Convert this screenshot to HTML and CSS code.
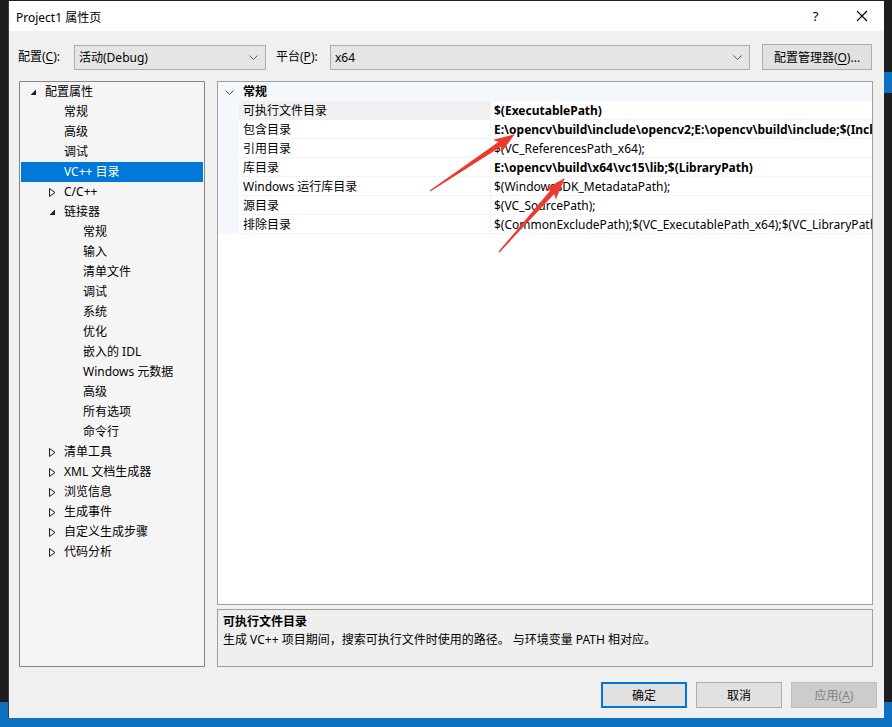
FILE: index.html
```html
<!DOCTYPE html>
<html lang="zh-CN">
<head>
<meta charset="utf-8">
<title>Project1 属性页</title>
<link rel="stylesheet" href="styles.css">
</head>
<body>
<div class="desk">
  <div class="dialog">
    <div class="titlebar">
      <span class="title">Project1 属性页</span>
      <span class="tb-btn help">?</span>
      <span class="tb-btn close"><svg width="12" height="12" viewBox="0 0 12 12"><path d="M1 1L11 11M11 1L1 11" stroke="#000" stroke-width="1.1" fill="none"/></svg></span>
    </div>
    <div class="content">
      <div class="config-row">
        <span class="lbl lbl-config">配置(<u>C</u>):</span>
        <div class="combo combo-config"><span>活动(Debug)</span><svg class="chev" width="9" height="5" viewBox="0 0 9 5"><path d="M0.5 0.5L4.5 4.5L8.5 0.5" stroke="#606060" fill="none"/></svg></div>
        <span class="lbl lbl-platform">平台(<u>P</u>):</span>
        <div class="combo combo-platform"><span>x64</span><svg class="chev" width="9" height="5" viewBox="0 0 9 5"><path d="M0.5 0.5L4.5 4.5L8.5 0.5" stroke="#606060" fill="none"/></svg></div>
        <button class="btn btn-manager">配置管理器(<u>O</u>)...</button>
      </div>
      <div class="main">
        <div class="tree">
          <div class="node l0"><span class="tg"><svg width="7" height="7" viewBox="0 0 7 7"><path d="M6 0.5V6H0.5Z" fill="#1e1e1e"/></svg></span>配置属性</div>
          <div class="node l1"><span class="tg"></span>常规</div>
          <div class="node l1"><span class="tg"></span>高级</div>
          <div class="node l1"><span class="tg"></span>调试</div>
          <div class="node l1 sel"><span class="tg"></span>VC++ 目录</div>
          <div class="node l1"><span class="tg"><svg width="7" height="9" viewBox="0 0 7 9"><path d="M0.5 0.5L6 4.5L0.5 8.5Z" stroke="#1e1e1e" fill="none"/></svg></span>C/C++</div>
          <div class="node l1"><span class="tg"><svg width="7" height="7" viewBox="0 0 7 7"><path d="M6 0.5V6H0.5Z" fill="#1e1e1e"/></svg></span>链接器</div>
          <div class="node l2"><span class="tg"></span>常规</div>
          <div class="node l2"><span class="tg"></span>输入</div>
          <div class="node l2"><span class="tg"></span>清单文件</div>
          <div class="node l2"><span class="tg"></span>调试</div>
          <div class="node l2"><span class="tg"></span>系统</div>
          <div class="node l2"><span class="tg"></span>优化</div>
          <div class="node l2"><span class="tg"></span>嵌入的 IDL</div>
          <div class="node l2"><span class="tg"></span>Windows 元数据</div>
          <div class="node l2"><span class="tg"></span>高级</div>
          <div class="node l2"><span class="tg"></span>所有选项</div>
          <div class="node l2"><span class="tg"></span>命令行</div>
          <div class="node l1"><span class="tg"><svg width="7" height="9" viewBox="0 0 7 9"><path d="M0.5 0.5L6 4.5L0.5 8.5Z" stroke="#1e1e1e" fill="none"/></svg></span>清单工具</div>
          <div class="node l1"><span class="tg"><svg width="7" height="9" viewBox="0 0 7 9"><path d="M0.5 0.5L6 4.5L0.5 8.5Z" stroke="#1e1e1e" fill="none"/></svg></span>XML 文档生成器</div>
          <div class="node l1"><span class="tg"><svg width="7" height="9" viewBox="0 0 7 9"><path d="M0.5 0.5L6 4.5L0.5 8.5Z" stroke="#1e1e1e" fill="none"/></svg></span>浏览信息</div>
          <div class="node l1"><span class="tg"><svg width="7" height="9" viewBox="0 0 7 9"><path d="M0.5 0.5L6 4.5L0.5 8.5Z" stroke="#1e1e1e" fill="none"/></svg></span>生成事件</div>
          <div class="node l1"><span class="tg"><svg width="7" height="9" viewBox="0 0 7 9"><path d="M0.5 0.5L6 4.5L0.5 8.5Z" stroke="#1e1e1e" fill="none"/></svg></span>自定义生成步骤</div>
          <div class="node l1"><span class="tg"><svg width="7" height="9" viewBox="0 0 7 9"><path d="M0.5 0.5L6 4.5L0.5 8.5Z" stroke="#1e1e1e" fill="none"/></svg></span>代码分析</div>
        </div>
        <div class="right">
          <div class="grid">
            <div class="grow head">
              <span class="gut"><svg width="9" height="5" viewBox="0 0 9 5"><path d="M0.5 0.5L4.5 4.5L8.5 0.5" stroke="#404040" fill="none"/></svg></span>
              <span class="cat">常规</span>
            </div>
            <div class="grow selrow"><span class="gut"></span><span class="name">可执行文件目录</span><span class="val b">$(ExecutablePath)</span></div>
            <div class="grow"><span class="gut"></span><span class="name">包含目录</span><span class="val b">E:\opencv\build\include\opencv2;E:\opencv\build\include;$(IncludePath)</span></div>
            <div class="grow"><span class="gut"></span><span class="name">引用目录</span><span class="val">$(VC_ReferencesPath_x64);</span></div>
            <div class="grow"><span class="gut"></span><span class="name">库目录</span><span class="val b">E:\opencv\build\x64\vc15\lib;$(LibraryPath)</span></div>
            <div class="grow"><span class="gut"></span><span class="name">Windows 运行库目录</span><span class="val">$(WindowsSDK_MetadataPath);</span></div>
            <div class="grow"><span class="gut"></span><span class="name">源目录</span><span class="val">$(VC_SourcePath);</span></div>
            <div class="grow"><span class="gut"></span><span class="name">排除目录</span><span class="val">$(CommonExcludePath);$(VC_ExecutablePath_x64);$(VC_LibraryPath_x64)</span></div>
          </div>
          <div class="desc">
            <div class="desc-title">可执行文件目录</div>
            <div class="desc-text">生成 VC++ 项目期间，搜索可执行文件时使用的路径。 与环境变量 PATH 相对应。</div>
          </div>
        </div>
      </div>
      <div class="buttons">
        <button class="btn btn-ok">确定</button>
        <button class="btn btn-cancel">取消</button>
        <button class="btn btn-apply" disabled>应用(<u>A</u>)</button>
      </div>
    </div>
  </div>
</div>
<svg class="arrows" width="892" height="727" viewBox="0 0 892 727">
  <g transform="translate(430,191) rotate(-33.8)">
    <path d="M0 -0.6L84 -2.6L81 -7.5L102 0L81 7.5L84 2.6L0 0.6Z" fill="#ea3b30"/>
  </g>
  <g transform="translate(499,252) rotate(-48.3)">
    <path d="M0 -0.6L80 -2.6L77 -7.5L99 0L77 7.5L80 2.6L0 0.6Z" fill="#ea3b30"/>
  </g>
</svg>
</body>
</html>
```
FILE: styles.css
```css
* { box-sizing: border-box; }
html, body { margin: 0; padding: 0; }
body {
  width: 892px;
  height: 727px;
  overflow: hidden;
  position: relative;
  font-family: "Noto Sans", "Noto Sans CJK SC", sans-serif;
  font-size: 12px;
  color: #000;
  background:
    linear-gradient(to bottom, transparent 72px, #0e70c0 72px, #0e70c0 93px, transparent 93px) right top / 8px 100% no-repeat,
    linear-gradient(to bottom, #1e1e1e 0, #1e1e1e 702px, #0e70c0 702px);
}
.desk {
  padding: 1px 0 0 8px;
}
.dialog {
  width: 876px;
  height: 717px;
  background: #f0f0f0;
  display: flex;
  flex-direction: column;
  border-left: 1px solid #3c3c3c;
}
.titlebar {
  height: 30px;
  background: #fff;
  display: flex;
  align-items: center;
  padding-left: 7px;
  flex: none;
}
.title {
  font-size: 12px;
  flex: 1;
  padding-top: 1px;
}
.tb-btn {
  width: 45px;
  height: 30px;
  display: flex;
  align-items: center;
  justify-content: center;
}
.help { font-size: 13px; margin-right: 1px; }
.content {
  flex: 1;
  display: flex;
  flex-direction: column;
  padding: 13px 7px 10px 9px;
  min-width: 0;
}
.config-row {
  display: flex;
  align-items: center;
  height: 26px;
  margin-right: 5px;
}
.config-row > * { flex: none; }
.lbl { line-height: 16px; }
.lbl-config { width: 56px; }
.lbl-platform { width: 54px; margin-left: 10px; }
u { text-decoration: underline; text-underline-offset: 2px; }
.combo {
  height: 25px;
  background: #e5e5e5;
  border: 1px solid #adadad;
  display: flex;
  align-items: center;
  justify-content: space-between;
  padding: 0 7px 0 4px;
}
.combo-config { width: 192px; }
.combo-platform { width: 420px; }
.chev { flex: none; }
.btn {
  font-family: inherit;
  font-size: 12px;
  color: #000;
  background: #e1e1e1;
  border: 1px solid #adadad;
  padding: 0;
  height: 26px;
  flex: none;
}
.btn-manager { width: 110px; margin-left: 12px; }
.main {
  display: flex;
  margin-top: 11px;
  height: 586px;
  margin-right: 4px;
  min-width: 0;
}
.tree {
  width: 186px;
  flex: none;
  margin-left: 1px;
  border: 1px solid #828790;
  background: #f5f5f5;
  padding: 0 1px;
}
.node {
  height: 20px;
  display: flex;
  align-items: center;
  white-space: nowrap;
  line-height: 20px;
}
.node.l0 { padding-left: 9px; }
.node.l1 { padding-left: 28px; }
.node.l2 { padding-left: 47px; }
.tg {
  width: 15px;
  height: 20px;
  flex: none;
  display: flex;
  align-items: center;
}
.node.sel { background: #0078d7; color: #fff; }
.right {
  margin-left: 12px;
  flex: 1;
  min-width: 0;
  display: flex;
  flex-direction: column;
}
.grid {
  height: 524px;
  border: 1px solid #a0a0a0;
  background: #fff;
  overflow: hidden;
}
.grow {
  display: flex;
  height: 19px;
  line-height: 18px;
  padding-top: 1px;
  border-bottom: 1px solid #f0f3f8;
  white-space: nowrap;
  min-width: 0;
}
.grow > span { margin-top: -1px; padding-top: 1px; height: 19px; }
.grow.head {
  background: #f4f7fc;
  border-bottom: none;
}
.gut {
  width: 21px;
  flex: none;
  background: #f4f7fc;
  display: flex;
  align-items: center;
  justify-content: center;
  padding-left: 1px;
}
.cat { font-weight: bold; padding-left: 4px; }
.name {
  width: 252px;
  flex: none;
  padding-left: 4px;
  border-right: 1px solid #f0f3f8;
  overflow: hidden;
}
.selrow .name { background: #f0f0f0; }
.val {
  flex: 1;
  min-width: 0;
  padding-left: 3px;
  overflow: hidden;
}
.val.b { font-weight: bold; }
.desc {
  margin-top: 4px;
  height: 58px;
  border: 1px solid #a0a0a0;
  background: #efefef;
  padding: 3px 5px;
}
.desc-title { font-weight: bold; line-height: 18px; }
.desc-text { line-height: 18px; }
.buttons {
  display: flex;
  justify-content: flex-end;
  margin-top: 15px;
}
.btn-ok { width: 86px; border: 2px solid #0078d7; }
.btn-cancel { width: 86px; margin-left: 9px; }
.btn-apply {
  width: 86px;
  margin-left: 9px;
  background: #cccccc;
  border-color: #bfbfbf;
  color: #838383;
}
.arrows {
  position: absolute;
  left: 0;
  top: 0;
  pointer-events: none;
}
```
